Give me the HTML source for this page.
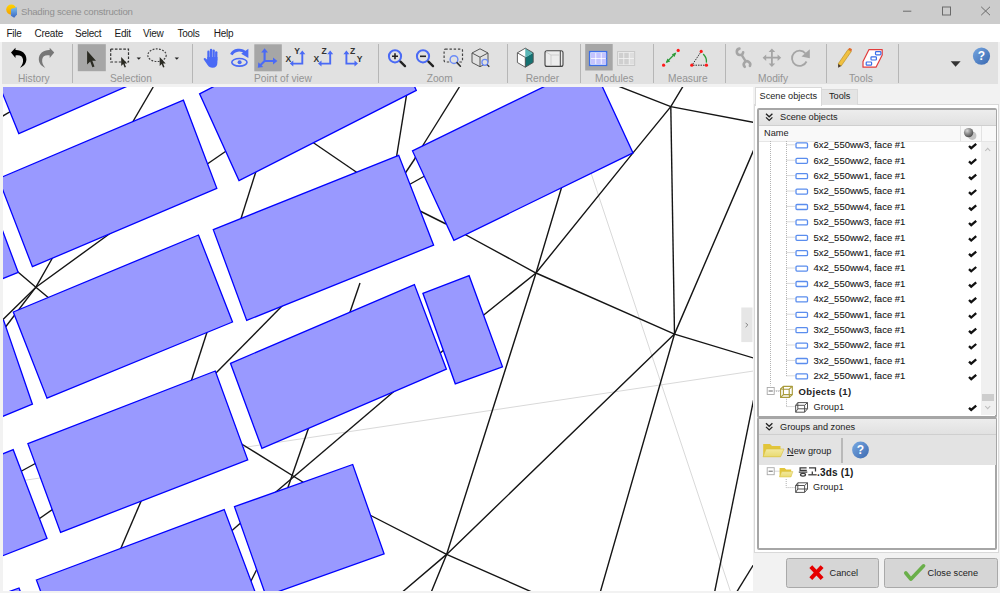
<!DOCTYPE html>
<html><head><meta charset="utf-8">
<style>
*{margin:0;padding:0;box-sizing:border-box}
html,body{width:1000px;height:593px;overflow:hidden;background:#f2f2f2;font-family:"Liberation Sans",sans-serif;position:relative}
.a{position:absolute}
#title{left:0;top:0;width:1000px;height:24px;background:#cccccc}
#menu{left:0;top:24px;width:1000px;height:18px;background:#fff}
#tb{left:0;top:42px;width:1000px;height:42px;background:#f0f0f0}
#tbp{left:2px;top:42px;width:995.7px;height:42.3px;background:#e1e1e1}
.mi{font-size:10px;line-height:1;letter-spacing:-0.25px;color:#1a1a1a;top:28.8px;white-space:nowrap}
.lbl{font-size:10.2px;line-height:1;color:#949494;top:74.2px;white-space:nowrap}
.sep{width:1.7px;background:#b6b6b6;top:44px;height:39px}
#vp{left:3px;top:87px;width:750px;height:504px;background:#fff;overflow:hidden}
#vp svg{position:absolute;left:0;top:0}
.r{fill:#9999ff;stroke:#0000ff;stroke-width:1.3;stroke-linejoin:miter}
.k{fill:none;stroke:#151515;stroke-width:1.4}
.g{fill:none;stroke:#d9d9d9;stroke-width:1}

.tr{font-size:9.5px;line-height:1;color:#111;-webkit-text-stroke:0.08px #111;left:813.5px;white-space:nowrap}
.dot{stroke:#b4b4b4;stroke-width:1;stroke-dasharray:1 1}
.ri{fill:#fff;stroke:#5a8dee;stroke-width:1.3}
.chk{fill:none;stroke:#111;stroke-width:2.3;stroke-linecap:butt;stroke-linejoin:miter}
.gb{border:2px solid #a6a6a6;background:#fff;border-radius:2px}
.gh{background:linear-gradient(#ededed,#e1e1e1);border-bottom:1px solid #cfcfcf}
.pt{font-size:9.2px;line-height:1;color:#222;white-space:nowrap}
.btn{background:#d6d6d6;border:1px solid #a9a9a9;border-radius:2.5px}
</style></head><body>
<div id="title" class="a"></div>
<div class="a" style="left:21px;top:6.9px;line-height:1;font-size:9.6px;letter-spacing:-0.24px;color:#909090;white-space:nowrap">Shading scene construction</div>
<div id="menu" class="a"></div>
<div class="a mi" style="left:6.5px">File</div>
<div class="a mi" style="left:34.5px">Create</div>
<div class="a mi" style="left:75px">Select</div>
<div class="a mi" style="left:114.5px">Edit</div>
<div class="a mi" style="left:143px">View</div>
<div class="a mi" style="left:177.5px">Tools</div>
<div class="a mi" style="left:213.7px">Help</div>
<div id="tbp" class="a"></div>
<svg class="a" style="left:0;top:0" width="1000" height="90" viewBox="0 0 1000 90">
<!-- window controls -->
<path d="M903 11.2H911.3" stroke="#6a6a6a" stroke-width="1"/>
<rect x="942.5" y="7" width="8" height="8" fill="none" stroke="#6a6a6a" stroke-width="1"/>
<path d="M981.2 6.8L990 15.2M990 6.8L981.2 15.2" stroke="#6a6a6a" stroke-width="1"/>
<!-- app icon -->
<defs><linearGradient id="sun" x1="0" y1="0" x2="0" y2="1"><stop offset="0" stop-color="#ffd400"/><stop offset="1" stop-color="#f5a000"/></linearGradient>
<linearGradient id="bld" x1="0" y1="0" x2="0" y2="1"><stop offset="0" stop-color="#7cc0ee"/><stop offset="1" stop-color="#3a66c0"/></linearGradient></defs>
<circle cx="11.3" cy="9.6" r="5.1" fill="url(#sun)"/>
<path d="M10.9 9 L17 7.1 L17 14.6 L14.2 17.8 L10.9 15.8 Z" fill="url(#bld)"/>
<!-- undo -->
<path d="M11 52.5 L15.5 47.7 L15.5 57.9 Z" fill="#000"/>
<path d="M15 50 C21 49.5 26.6 53 26.4 59.6 C26.2 64 23 66.8 20 67.8 C22.3 65.4 23.4 62.5 23 59.6 C22.6 56 19.5 54.6 15 55.6 Z" fill="#000"/>
<!-- redo -->
<path d="M54.2 52.5 L49.7 47.7 L49.7 57.9 Z" fill="#777"/>
<path d="M50.2 50 C44.2 49.5 38.6 53 38.8 59.6 C39 64 42.2 66.8 45.2 67.8 C42.9 65.4 41.8 62.5 42.2 59.6 C42.6 56 45.7 54.6 50.2 55.6 Z" fill="#777"/>
<!-- pressed buttons -->
<rect x="77.8" y="44.2" width="28" height="27" fill="#a6a6a6"/>
<rect x="254.3" y="44.3" width="27.5" height="27" fill="#a6a6a6"/>
<rect x="585.2" y="44" width="27.5" height="26.5" fill="#a6a6a6"/>
<!-- arrow cursor -->
<path d="M87.1 50.8 L87.1 64.6 L90.2 61.6 L92.4 67.3 L94.5 66.4 L92.3 60.8 L96 60.8 Z" fill="#2a2a22"/>
<!-- rect select -->
<rect x="110.7" y="49.1" width="17.8" height="12.9" fill="none" stroke="#333" stroke-width="1.2" stroke-dasharray="2.6 1.6"/>
<path d="M121.2 56.9 L121.2 66 L123.2 64 L124.6 67.5 L126 66.9 L124.6 63.5 L127.2 63.5 Z" fill="#2a2a22"/>
<path d="M136.6 57.4 H141 L138.8 59.8 Z" fill="#222"/>
<!-- lasso -->
<ellipse cx="157" cy="55.2" rx="9.2" ry="6.3" fill="none" stroke="#444" stroke-width="1.2" stroke-dasharray="1.8 1.4"/>
<path d="M159.7 56.9 L159.7 66 L161.7 64 L163.1 67.5 L164.5 66.9 L163.1 63.5 L165.7 63.5 Z" fill="#2a2a22"/>
<path d="M174.6 57.4 H179 L176.8 59.8 Z" fill="#222"/>
<!-- hand -->
<g fill="#4a6af5">
<rect x="207.3" y="50.6" width="2.3" height="10" rx="1.1"/>
<rect x="209.9" y="48.7" width="2.3" height="11" rx="1.1"/>
<rect x="212.5" y="49.4" width="2.3" height="11" rx="1.1"/>
<rect x="215.1" y="51.2" width="2.3" height="10" rx="1.1"/>
<path d="M207.3 57 H217.4 V62.8 C217.4 66 215.6 67.8 212.6 67.8 C210.2 67.8 208.8 66.8 207.6 65 L203.8 59.6 C203.3 58.6 204.4 57.6 205.4 58.3 L207.3 59.8 Z"/>
</g>
<!-- eye rotate -->
<path d="M231.4 54.6 C233.5 49.6 241.5 48.6 245.5 52.8" fill="none" stroke="#4a6af5" stroke-width="2.8"/>
<path d="M248.4 48.8 L248.4 58 L241.2 53.8 Z" fill="#4a6af5"/>
<ellipse cx="239.4" cy="62.3" rx="7.6" ry="3.8" fill="none" stroke="#4a6af5" stroke-width="1.6"/>
<circle cx="239.6" cy="62.3" r="2" fill="#4a6af5"/>
<!-- axes -->
<g stroke="#4a6af5" stroke-width="2.1" fill="#4a6af5">
<path d="M264.6 61 V51.5 M264.6 61 H274 M264.6 61 L260.3 65.3" fill="none"/>
<path d="M264.6 48.2 L261.2 52.6 L268 52.6 Z" stroke="none"/>
<path d="M277.4 61 L273 57.6 L273 64.4 Z" stroke="none"/>
<path d="M257.8 67.7 L258.4 62.3 L263.2 67.1 Z" stroke="none"/>
</g>
<!-- xy / xz / zy -->
<g font-family="Liberation Sans" font-weight="bold" font-size="8.6" fill="#333">
<text x="285.6" y="61.5">X</text><text x="294.3" y="54.3">Y</text>
<text x="313.6" y="61.5">X</text><text x="321.4" y="54.3">Z</text>
<text x="350" y="54.3">Z</text><text x="356.8" y="61.5">Y</text>
</g>
<g stroke="#4a6af5" stroke-width="1.9" fill="none">
<path d="M302.3 53.5 V63.6 H292.5"/>
<path d="M330.2 53.5 V63.6 H320.8"/>
<path d="M346.4 53.5 V63.6 H355"/>
</g>
<g fill="#4a6af5">
<path d="M302.3 50.6 L299.3 54.2 L305.3 54.2 Z M289.8 63.6 L293.3 60.6 L293.3 66.6 Z"/>
<path d="M330.2 50.6 L327.2 54.2 L333.2 54.2 Z M318 63.6 L321.5 60.6 L321.5 66.6 Z"/>
<path d="M346.4 50.6 L343.4 54.2 L349.4 54.2 Z M358 63.6 L354.5 60.6 L354.5 66.6 Z"/>
</g>
<!-- zoom in/out -->
<circle cx="395" cy="56.3" r="6.1" fill="none" stroke="#4a6af5" stroke-width="2"/>
<path d="M392 56.3 H398 M395 53.3 V59.3" stroke="#222" stroke-width="1.6"/>
<path d="M400.5 61.6 L405 66.1" stroke="#222" stroke-width="2.3" stroke-linecap="round"/>
<circle cx="423" cy="56.3" r="6.1" fill="none" stroke="#4a6af5" stroke-width="2"/>
<path d="M420 56.3 H426" stroke="#222" stroke-width="1.6"/>
<path d="M428.5 61.6 L433 66.1" stroke="#222" stroke-width="2.3" stroke-linecap="round"/>
<!-- zoom rect -->
<rect x="444.1" y="49.1" width="18.4" height="12.9" rx="1.2" fill="none" stroke="#444" stroke-width="1.2" stroke-dasharray="2.4 1.8"/>
<circle cx="454" cy="59.6" r="3.9" fill="#e1e1e1" stroke="#6a8af7" stroke-width="1.4"/>
<path d="M457 62.6 L460.4 66.2" stroke="#333" stroke-width="1.6" stroke-linecap="round"/>
<!-- zoom cube -->
<g fill="none" stroke="#555" stroke-width="1">
<path d="M480 48.8 L488 53 L488 62.5 L480 66.7 L472 62.5 L472 53 Z"/>
<path d="M472 53 L480 57.2 L488 53 M480 57.2 V66.7"/>
</g>
<circle cx="484.9" cy="62.3" r="3" fill="#e1e1e1" stroke="#6a8af7" stroke-width="1.3"/>
<path d="M487.2 64.6 L489.3 66.8" stroke="#333" stroke-width="1.3"/>
<!-- render cube -->
<path d="M525.3 48.2 L517.4 52.8 V62.5 L525.3 67.2 Z" fill="#fff"/>
<path d="M525.3 57.4 L533.2 52.8 V62.5 L525.3 67.2 Z" fill="#157272"/>
<path d="M525.3 48.2 L533.2 52.8 L525.3 57.4 Z" fill="#5ab8b8"/>
<path d="M525.3 48.2 L533.2 52.8 V62.5 L525.3 67.2 L517.4 62.5 V52.8 Z M517.4 52.8 L525.3 57.4 V67.2" fill="none" stroke="#505050" stroke-width="0.9" stroke-linejoin="round"/>
<!-- render box -->
<rect x="545" y="50.8" width="18" height="15.6" rx="2" fill="#ececec" stroke="#444" stroke-width="1.1"/>
<path d="M560.3 51 V66.3" stroke="#444" stroke-width="1"/>
<path d="M546 52 L551 55 H560 M551 55 V66" stroke="#c8c8c8" stroke-width="0.8" fill="none"/>
<!-- modules -->
<rect x="589.6" y="51.6" width="17" height="13.8" fill="#fff" stroke="#3b6ee8" stroke-width="1.4"/>
<g fill="#c4c4ff">
<rect x="590.8" y="52.8" width="4.6" height="5.4"/><rect x="596.2" y="52.8" width="4.6" height="5.4"/><rect x="601.6" y="52.8" width="4.6" height="5.4"/>
<rect x="590.8" y="59" width="4.6" height="5.4"/><rect x="596.2" y="59" width="4.6" height="5.4"/><rect x="601.6" y="59" width="4.6" height="5.4"/>
</g>
<rect x="617.6" y="51.6" width="17" height="13.8" fill="#f4f4f4" stroke="#c8c8c8" stroke-width="1.1"/>
<g fill="#cfcfcf">
<rect x="618.8" y="52.8" width="4.6" height="5.4"/><rect x="624.2" y="52.8" width="4.6" height="5.4"/><rect x="629.6" y="52.8" width="4.6" height="5.4" fill="#dedede"/>
<rect x="618.8" y="59" width="4.6" height="5.4"/><rect x="624.2" y="59" width="4.6" height="5.4"/><rect x="629.6" y="59" width="4.6" height="5.4" fill="#dedede"/>
</g>
<!-- measure -->
<path d="M666.5 62.3 L675.5 53.3" stroke="#2e9a3a" stroke-width="1.3"/>
<path d="M676.2 52.6 L671.8 54.2 L674.6 57 Z M665.8 63 L670.2 61.4 L667.4 58.6 Z" fill="#2e9a3a"/>
<circle cx="663.6" cy="65.2" r="1.6" fill="#ff1a1a"/>
<circle cx="678.2" cy="50.4" r="1.6" fill="#ff1a1a"/>
<path d="M700.5 52.5 L692.5 64.5 M693 65.2 H705.5" stroke="#333" stroke-width="1" stroke-dasharray="1.5 1"/>
<path d="M703.2 54 C705.6 56.5 707 59 706.4 62.6" stroke="#2e9a3a" stroke-width="1.3" fill="none"/>
<circle cx="701.2" cy="51.4" r="1.6" fill="#ff1a1a"/>
<circle cx="691.8" cy="65.2" r="1.6" fill="#ff1a1a"/>
<circle cx="706.4" cy="65.2" r="1.6" fill="#ff1a1a"/>
<!-- wrench -->
<g fill="none" stroke="#a5a5a5" stroke-linecap="round">
<path d="M743.15 52.36 A3.2 3.2 0 1 1 739.44 48.65" stroke-width="2.6"/>
<path d="M741.8 55.2 L745.4 60.8" stroke-width="2.4"/>
<path d="M744.74 66.76 A3.2 3.2 0 1 1 749.9 65.85" stroke-width="2.6"/>
</g>
<!-- move -->
<g fill="#a5a5a5">
<path d="M771.9 50.8 V64.6 M765 57.7 H778.8" stroke="#a5a5a5" stroke-width="1.8"/>
<path d="M771.9 48.4 L768.6 52 H775.2 Z M771.9 67 L768.6 63.4 H775.2 Z M762.6 57.7 L766.2 54.4 V61 Z M781.2 57.7 L777.6 54.4 V61 Z"/>
</g>
<!-- rotate -->
<path d="M805.5 53.5 A7.6 7.6 0 1 0 806.5 61.5" fill="none" stroke="#a5a5a5" stroke-width="1.8"/>
<path d="M809.8 49.3 V58.2 L801.5 56.5 Z" fill="#a5a5a5"/>
<!-- pencil -->
<path d="M848 49.5 L851.3 51.5 L841.2 66 L838 64 Z" fill="#f0c040" stroke="#b08a20" stroke-width="0.6"/>
<path d="M848 49.5 L849 48.2 C849.8 47.6 851.5 48.5 852 49.6 L851.3 51.5 Z" fill="#e06a2a"/>
<path d="M838 64 L841.2 66 L838.2 67.8 Z" fill="#4a3a2a"/>
<!-- tools icon -->
<path d="M869 49.6 H882.2 V55 L876 67.2 H863 V61.5 Z" fill="#fff" stroke="#e23c3c" stroke-width="1.2" stroke-linejoin="round"/>
<g fill="#fff" stroke="#3a6ee8" stroke-width="1.2">
<rect x="875.5" y="51.6" width="5.4" height="3.2" rx="0.8"/>
<rect x="871" y="56.8" width="5.4" height="3.2" rx="0.8"/>
<rect x="866.2" y="62" width="5.4" height="3.2" rx="0.8"/>
</g>
<!-- dropdown + help -->
<path d="M950.7 61.2 H960.6 L955.6 66.8 Z" fill="#333"/>
<defs><linearGradient id="hg" x1="0" y1="0" x2="1" y2="1"><stop offset="0" stop-color="#76a6e0"/><stop offset="1" stop-color="#3867b0"/></linearGradient></defs>
<circle cx="981.5" cy="56.1" r="8.6" fill="url(#hg)"/>
<text x="981.5" y="60.4" text-anchor="middle" font-family="Liberation Sans" font-weight="bold" font-size="12" fill="#fff">?</text>
</svg>

<div class="a lbl" style="left:18px">History</div>
<div class="a lbl" style="left:110px">Selection</div>
<div class="a lbl" style="left:254px">Point of view</div>
<div class="a lbl" style="left:426.7px">Zoom</div>
<div class="a lbl" style="left:525.7px">Render</div>
<div class="a lbl" style="left:595px">Modules</div>
<div class="a lbl" style="left:668px">Measure</div>
<div class="a lbl" style="left:758px">Modify</div>
<div class="a lbl" style="left:849px">Tools</div>
<div class="a sep" style="left:71.6px"></div>
<div class="a sep" style="left:191.6px"></div>
<div class="a sep" style="left:377.6px"></div>
<div class="a sep" style="left:506.6px"></div>
<div class="a sep" style="left:579.6px"></div>
<div class="a sep" style="left:652.6px"></div>
<div class="a sep" style="left:724.6px"></div>
<div class="a sep" style="left:825.6px"></div>
<div class="a sep" style="left:897.6px"></div>
<div id="vp" class="a"><svg width="750" height="504" viewBox="3 87 750 504">
<polyline points="590.0,170.0 740.0,620.0" class="g"/>
<polyline points="20.0,481.0 757.0,370.5" class="g"/>
<polyline points="153.2,87.0 128.0,130.0" class="k"/>
<polyline points="1.0,117.0 20.0,106.0" class="k"/>
<polyline points="200.0,169.0 232.0,147.0" class="k"/>
<polyline points="305.0,137.0 365.0,178.0" class="k"/>
<polyline points="258.0,165.0 238.0,228.0" class="k"/>
<polyline points="408.0,86.0 396.0,160.0" class="k"/>
<polyline points="459.4,87.0 415.0,158.0" class="k"/>
<polyline points="420.0,151.0 402.0,178.0" class="k"/>
<polyline points="405.0,187.0 430.0,173.0" class="k"/>
<polyline points="600.0,79.0 670.8,106.6 760.0,123.5" class="k"/>
<polyline points="685.0,83.0 670.8,106.6 633.0,152.9 536.0,273.0 480.0,318.0" class="k"/>
<polyline points="670.8,106.6 674.5,334.1" class="k"/>
<polyline points="758.0,140.0 674.5,334.1 598.0,600.0" class="k"/>
<polyline points="565.0,176.0 536.0,273.0 446.6,554.4 428.0,600.0" class="k"/>
<polyline points="455.0,229.0 536.0,273.0 674.5,334.1 760.0,360.0" class="k"/>
<polyline points="674.5,334.1 446.6,554.4 393.0,600.0" class="k"/>
<polyline points="360.0,510.0 446.6,554.4 550.0,600.0" class="k"/>
<polyline points="757.0,383.0 713.0,600.0" class="k"/>
<polyline points="757.0,559.0 733.0,598.0" class="k"/>
<polyline points="112.0,232.0 35.9,287.2 1.0,321.5" class="k"/>
<polyline points="53.0,257.0 35.9,287.2 4.0,329.0" class="k"/>
<polyline points="15.0,269.5 35.9,287.2 50.0,299.0" class="k"/>
<polyline points="209.0,326.0 189.0,388.0" class="k"/>
<polyline points="283.0,305.0 214.0,375.0" class="k"/>
<polyline points="360.0,283.0 348.0,318.0" class="k"/>
<polyline points="405.0,382.0 270.0,497.0" class="k"/>
<polyline points="240.0,443.0 306.0,484.0" class="k"/>
<polyline points="311.0,421.0 286.0,493.0" class="k"/>
<polyline points="18.0,473.0 38.0,462.0" class="k"/>
<polyline points="145.0,492.0 118.0,555.0" class="k"/>
<polyline points="36.0,521.0 56.0,507.0" class="k"/>
<polyline points="228.0,534.0 244.0,520.0" class="k"/>
<polyline points="249.0,585.0 259.0,565.0" class="k"/>
<polyline points="420.0,211.0 446.0,224.0" class="k"/>
<polyline points="438.0,355.0 446.0,348.0" class="k"/>
<polygon points="-16.9,45.5 169.1,-35.8 204.8,52.3 18.8,133.6" class="r"/>
<polygon points="-1.6,178.6 183.4,100.2 216.8,188.3 32.4,266.7" class="r"/>
<polygon points="199.6,93.8 376.6,3.2 416.3,90.4 239.0,180.6" class="r"/>
<polygon points="213.3,229.6 398.7,155.3 433.6,245.2 246.7,320.4" class="r"/>
<polygon points="412.5,150.9 591.6,63.5 633.0,152.9 453.9,240.3" class="r"/>
<polygon points="-200.8,259.4 -14.8,184.4 18.2,272.4 -167.8,347.4" class="r"/>
<polygon points="13.3,312.0 198.5,235.0 232.5,322.0 47.0,398.2" class="r"/>
<polygon points="230.5,363.3 414.4,284.6 446.4,369.2 261.9,448.3" class="r"/>
<polygon points="422.9,293.3 469.1,275.7 502.5,366.8 455.3,383.8" class="r"/>
<polygon points="-181.4,396.3 3.6,320.3 32.4,404.2 -152.6,480.2" class="r"/>
<polygon points="27.9,443.6 215.3,371.0 247.7,459.8 60.6,532.4" class="r"/>
<polygon points="-173.8,522.7 13.2,449.7 47.0,538.4 -140.0,611.4" class="r"/>
<polygon points="234.5,506.7 352.7,464.5 384.1,553.8 266.0,596.0" class="r"/>
<polygon points="36.4,580.0 224.2,509.6 257.2,597.6 69.4,668.0" class="r"/>
<polygon points="-170.0,657.0 19.0,588.0 52.0,676.0 -137.0,745.0" class="r"/>

</svg></div>

<div class="a" style="left:753px;top:84px;width:247px;height:509px;background:#f2f2f2"></div>
<div class="a" style="left:754px;top:104px;width:245px;height:449px;background:#fff;border:1px solid #d9d9d9"></div>
<div class="a" style="left:755px;top:87px;width:67px;height:18.5px;background:#fff;border:1px solid #d9d9d9;border-bottom:none"></div>
<div class="a" style="left:822px;top:89px;width:35.5px;height:15.5px;background:#e4e4e4;border:1px solid #d9d9d9;border-bottom:none;border-left:none"></div>
<div class="a pt" style="left:759.5px;top:91.5px">Scene objects</div>
<div class="a pt" style="left:829px;top:92px">Tools</div>
<!-- group box 1 -->
<div class="a gb" style="left:757px;top:108px;width:240px;height:310px"></div>
<div class="a gh" style="left:758.5px;top:109.5px;width:237px;height:16px"></div>
<div class="a" style="left:758.5px;top:125.5px;width:237px;height:16px;background:#f9f9f9;border-bottom:1px solid #e6e6e6"></div>
<div class="a" style="left:959.5px;top:125.5px;width:1px;height:16px;background:#e3e3e3"></div>
<div class="a" style="left:980.5px;top:125.5px;width:1px;height:16px;background:#e3e3e3"></div>
<div class="a pt" style="left:764px;top:129px">Name</div>
<div class="a pt" style="left:780px;top:113px">Scene objects</div>
<div class="a" style="left:981px;top:141.5px;width:14.5px;height:273px;background:#f0f0f0"></div>
<div class="a" style="left:982px;top:393.5px;width:12px;height:7px;background:#cdcdcd"></div>
<!-- group box 2 -->
<div class="a gb" style="left:757px;top:417px;width:240px;height:133px"></div>
<div class="a gh" style="left:758.5px;top:418.5px;width:237px;height:16.5px"></div>
<div class="a" style="left:758.5px;top:435px;width:237px;height:29.5px;background:#e3e3e3"></div>
<div class="a" style="left:841.3px;top:437.5px;width:1.4px;height:25.5px;background:#b9b9b9"></div>
<div class="a pt" style="left:780px;top:422.5px">Groups and zones</div>
<div class="a pt" style="left:787px;top:447px"><u>N</u>ew group</div>
<div class="a pt" style="left:817px;top:467.5px;font-weight:bold;font-size:10px;letter-spacing:0.2px;color:#1a1a1a">.3ds (1)</div>
<div class="a pt" style="left:813px;top:483px">Group1</div>
<div class="a pt" style="left:798.5px;top:386.5px;font-weight:bold;font-size:9.5px;letter-spacing:0.35px">Objects (1)</div>
<div class="a pt" style="left:813.5px;top:403px">Group1</div>
<!-- buttons -->
<div class="a btn" style="left:786px;top:557.5px;width:93px;height:30px"></div>
<div class="a btn" style="left:884px;top:557.5px;width:113.5px;height:30px"></div>
<div class="a pt" style="left:829.5px;top:568.7px">Cancel</div>
<div class="a pt" style="left:927.5px;top:568.7px">Close scene</div>
<svg class="a" style="left:757px;top:141px" width="240" height="274">
<line x1="13.5" y1="0" x2="13.5" y2="244.5" class="dot"/>
<line x1="29.5" y1="0" x2="29.5" y2="235" class="dot"/>
<line x1="29.5" y1="3.8" x2="38" y2="3.8" class="dot"/>
<rect x="39" y="1.9" width="11.5" height="5" rx="1" class="ri"/>
<path d="M212 5.0 l2.2 2.1 l5.0 -4.3" class="chk"/>
<line x1="29.5" y1="19.2" x2="38" y2="19.2" class="dot"/>
<rect x="39" y="17.3" width="11.5" height="5" rx="1" class="ri"/>
<path d="M212 20.4 l2.2 2.1 l5.0 -4.3" class="chk"/>
<line x1="29.5" y1="34.6" x2="38" y2="34.6" class="dot"/>
<rect x="39" y="32.7" width="11.5" height="5" rx="1" class="ri"/>
<path d="M212 35.8 l2.2 2.1 l5.0 -4.3" class="chk"/>
<line x1="29.5" y1="50.0" x2="38" y2="50.0" class="dot"/>
<rect x="39" y="48.1" width="11.5" height="5" rx="1" class="ri"/>
<path d="M212 51.2 l2.2 2.1 l5.0 -4.3" class="chk"/>
<line x1="29.5" y1="65.4" x2="38" y2="65.4" class="dot"/>
<rect x="39" y="63.5" width="11.5" height="5" rx="1" class="ri"/>
<path d="M212 66.6 l2.2 2.1 l5.0 -4.3" class="chk"/>
<line x1="29.5" y1="80.8" x2="38" y2="80.8" class="dot"/>
<rect x="39" y="78.9" width="11.5" height="5" rx="1" class="ri"/>
<path d="M212 82.0 l2.2 2.1 l5.0 -4.3" class="chk"/>
<line x1="29.5" y1="96.2" x2="38" y2="96.2" class="dot"/>
<rect x="39" y="94.3" width="11.5" height="5" rx="1" class="ri"/>
<path d="M212 97.4 l2.2 2.1 l5.0 -4.3" class="chk"/>
<line x1="29.5" y1="111.6" x2="38" y2="111.6" class="dot"/>
<rect x="39" y="109.7" width="11.5" height="5" rx="1" class="ri"/>
<path d="M212 112.8 l2.2 2.1 l5.0 -4.3" class="chk"/>
<line x1="29.5" y1="127.0" x2="38" y2="127.0" class="dot"/>
<rect x="39" y="125.1" width="11.5" height="5" rx="1" class="ri"/>
<path d="M212 128.2 l2.2 2.1 l5.0 -4.3" class="chk"/>
<line x1="29.5" y1="142.4" x2="38" y2="142.4" class="dot"/>
<rect x="39" y="140.5" width="11.5" height="5" rx="1" class="ri"/>
<path d="M212 143.6 l2.2 2.1 l5.0 -4.3" class="chk"/>
<line x1="29.5" y1="157.8" x2="38" y2="157.8" class="dot"/>
<rect x="39" y="155.9" width="11.5" height="5" rx="1" class="ri"/>
<path d="M212 159.0 l2.2 2.1 l5.0 -4.3" class="chk"/>
<line x1="29.5" y1="173.2" x2="38" y2="173.2" class="dot"/>
<rect x="39" y="171.3" width="11.5" height="5" rx="1" class="ri"/>
<path d="M212 174.4 l2.2 2.1 l5.0 -4.3" class="chk"/>
<line x1="29.5" y1="188.6" x2="38" y2="188.6" class="dot"/>
<rect x="39" y="186.7" width="11.5" height="5" rx="1" class="ri"/>
<path d="M212 189.8 l2.2 2.1 l5.0 -4.3" class="chk"/>
<line x1="29.5" y1="204.0" x2="38" y2="204.0" class="dot"/>
<rect x="39" y="202.1" width="11.5" height="5" rx="1" class="ri"/>
<path d="M212 205.2 l2.2 2.1 l5.0 -4.3" class="chk"/>
<line x1="29.5" y1="219.4" x2="38" y2="219.4" class="dot"/>
<rect x="39" y="217.5" width="11.5" height="5" rx="1" class="ri"/>
<path d="M212 220.6 l2.2 2.1 l5.0 -4.3" class="chk"/>
<line x1="29.5" y1="234.8" x2="38" y2="234.8" class="dot"/>
<rect x="39" y="232.9" width="11.5" height="5" rx="1" class="ri"/>
<path d="M212 236.0 l2.2 2.1 l5.0 -4.3" class="chk"/>
<line x1="17" y1="250.2" x2="23" y2="250.2" class="dot"/>
<line x1="29.5" y1="256.2" x2="29.5" y2="265.6" class="dot"/>
<line x1="29.5" y1="265.6" x2="38" y2="265.6" class="dot"/>
<path d="M212 266.8 l2.2 2.1 l5.0 -4.3" class="chk"/>
</svg>
<div class="a tr" style="top:140.1px">6x2_550ww3, face #1</div>
<div class="a tr" style="top:155.5px">6x2_550ww2, face #1</div>
<div class="a tr" style="top:170.9px">6x2_550ww1, face #1</div>
<div class="a tr" style="top:186.3px">5x2_550ww5, face #1</div>
<div class="a tr" style="top:201.7px">5x2_550ww4, face #1</div>
<div class="a tr" style="top:217.1px">5x2_550ww3, face #1</div>
<div class="a tr" style="top:232.5px">5x2_550ww2, face #1</div>
<div class="a tr" style="top:247.9px">5x2_550ww1, face #1</div>
<div class="a tr" style="top:263.3px">4x2_550ww4, face #1</div>
<div class="a tr" style="top:278.7px">4x2_550ww3, face #1</div>
<div class="a tr" style="top:294.1px">4x2_550ww2, face #1</div>
<div class="a tr" style="top:309.5px">4x2_550ww1, face #1</div>
<div class="a tr" style="top:324.9px">3x2_550ww3, face #1</div>
<div class="a tr" style="top:340.3px">3x2_550ww2, face #1</div>
<div class="a tr" style="top:355.7px">3x2_550ww1, face #1</div>
<div class="a tr" style="top:371.1px">2x2_550ww1, face #1</div>

<svg class="a" style="left:740px;top:80px" width="260" height="513" viewBox="740 80 260 513">
<!-- collapse button -->
<rect x="741.3" y="307.5" width="11.2" height="34.6" fill="#e6e6e6"/>
<path d="M745.6 322.8 L747.8 325 L745.6 327.2" fill="none" stroke="#777" stroke-width="0.9"/>
<!-- chevrons -->
<path d="M766 113.8 L769.2 116.8 L772.4 113.8 M766 117.4 L769.2 120.4 L772.4 117.4" fill="none" stroke="#222" stroke-width="1.3"/>
<path d="M766 423.3 L769.2 426.3 L772.4 423.3 M766 426.9 L769.2 429.9 L772.4 426.9" fill="none" stroke="#222" stroke-width="1.3"/>
<!-- sphere -->
<defs>
<radialGradient id="sph" cx="0.35" cy="0.3" r="0.75"><stop offset="0" stop-color="#d8d8d8"/><stop offset="0.5" stop-color="#8a8a8a"/><stop offset="1" stop-color="#4a4a4a"/></radialGradient>
<linearGradient id="fold" x1="0" y1="0" x2="0" y2="1"><stop offset="0" stop-color="#f3e9a0"/><stop offset="1" stop-color="#e8da70"/></linearGradient>
<linearGradient id="hg2" x1="0" y1="0" x2="1" y2="1"><stop offset="0" stop-color="#7aaae2"/><stop offset="1" stop-color="#3a68b0"/></linearGradient>
</defs>
<circle cx="972.3" cy="135.8" r="4.1" fill="#c4c4c4"/>
<circle cx="968.6" cy="132.6" r="4.7" fill="url(#sph)"/>
<!-- scroll arrows -->
<path d="M985.2 151 L987.7 148.3 L990.2 151" fill="none" stroke="#bdbdbd" stroke-width="1.1"/>
<path d="M985.2 406 L987.7 408.7 L990.2 406" fill="none" stroke="#bdbdbd" stroke-width="1.1"/>
<!-- expander objects -->
<rect x="767.2" y="387.5" width="7" height="7" fill="#fff" stroke="#a8a8a8" stroke-width="0.9"/>
<path d="M768.6 391 H772.8" stroke="#666" stroke-width="1"/>
<!-- objects olive cube -->
<g fill="none" stroke="#a99b3c" stroke-width="1.15" stroke-linejoin="round">
<path d="M780.6 389.0 L783.4 386.3 H792.3 V394.6 L789.4 397.4 H780.6 Z"/>
<rect x="783.4" y="389.2" width="5.8" height="5.4"/>
<path d="M780.6 389.0 L783.4 389.2 M792.3 386.3 L789.2 389.2 M792.3 394.6 L789.2 394.6 M780.6 397.4 L783.4 394.6 M783.4 386.3 V389.2 M789.4 397.4 V394.6"/>
</g>
<path d="M774.3 390.8 H780" stroke="#b8b8b8" stroke-width="1" stroke-dasharray="1 0.6"/>
<!-- group1 icon (objects tree) -->
<g fill="none" stroke="#4a4a4a" stroke-width="0.95" stroke-linejoin="round">
<path d="M795.6 405.3 L797.8 402.6 H807.5 V408.8 L804.6 412.2 H795.7 Z"/>
<path d="M795.6 405.3 H804.6 V412.2 M804.6 405.3 L807.5 402.6 M797.8 402.6 V408.8 H807.5 M797.8 408.8 L795.7 412.2"/>
</g>
<!-- folder toolbar -->
<path d="M763.2 444 H770 L772 446 H780.5 V456.8 H763.2 Z" fill="#e2c53a"/>
<path d="M766 449 H784 L780.6 456.8 H763 Z" fill="url(#fold)" stroke="#d8c040" stroke-width="0.6"/>
<!-- help circle -->
<circle cx="860.5" cy="450" r="8.4" fill="url(#hg2)"/>
<text x="860.5" y="454.3" text-anchor="middle" font-family="Liberation Sans" font-weight="bold" font-size="12" fill="#fff">?</text>
<!-- expander groups -->
<rect x="767.2" y="467.7" width="7" height="7" fill="#fff" stroke="#a8a8a8" stroke-width="0.9"/>
<path d="M768.6 471.2 H772.8" stroke="#666" stroke-width="1"/>
<path d="M774.5 471.2 H779.5" stroke="#b0b0b0" stroke-width="1" stroke-dasharray="1 1"/>
<!-- folder tree -->
<path d="M779.6 468 H784.6 L786.2 469.6 H791.2 V477 H779.6 Z" fill="#e2c53a"/>
<path d="M781.6 471.6 H793 L790.8 477 H779.6 Z" fill="url(#fold)" stroke="#d8c040" stroke-width="0.5"/>
<!-- tree lines group -->
<path d="M786.2 479 V487.6 H795" fill="none" stroke="#b0b0b0" stroke-width="1" stroke-dasharray="1 1"/>
<g fill="none" stroke="#4a4a4a" stroke-width="0.95" stroke-linejoin="round">
<path d="M795.6 485.5 L797.8 482.8 H807.5 V489 L804.6 492.4 H795.7 Z"/>
<path d="M795.6 485.5 H804.6 V492.4 M804.6 485.5 L807.5 482.8 M797.8 482.8 V489 H807.5 M797.8 489 L795.7 492.4"/>
</g>
<!-- cancel X -->
<path d="M810.8 566.6 L822.1 578.6 M822.1 566.6 L810.8 578.6" stroke="#e60000" stroke-width="4" stroke-linecap="butt"/>
<!-- check -->
<path d="M905.8 573 L910.8 579.2 L923.6 565.8" fill="none" stroke="#6aaf4a" stroke-width="3.6" stroke-linejoin="round" stroke-linecap="round"/>
<!-- hangul -->
<g fill="none" stroke="#3a3a3a" stroke-width="1.25">
<path d="M806.6 467.9 H800.1 V470.4 H806.8"/>
<path d="M798.8 472.1 H807.3"/>
<ellipse cx="803" cy="474.7" rx="2.5" ry="1.35"/>
<path d="M809 467.9 H815.5 V471.6"/>
<path d="M812.3 471.4 V474.4"/>
<path d="M808.3 474.8 H816.7"/>
</g>
</svg>

</body></html>
